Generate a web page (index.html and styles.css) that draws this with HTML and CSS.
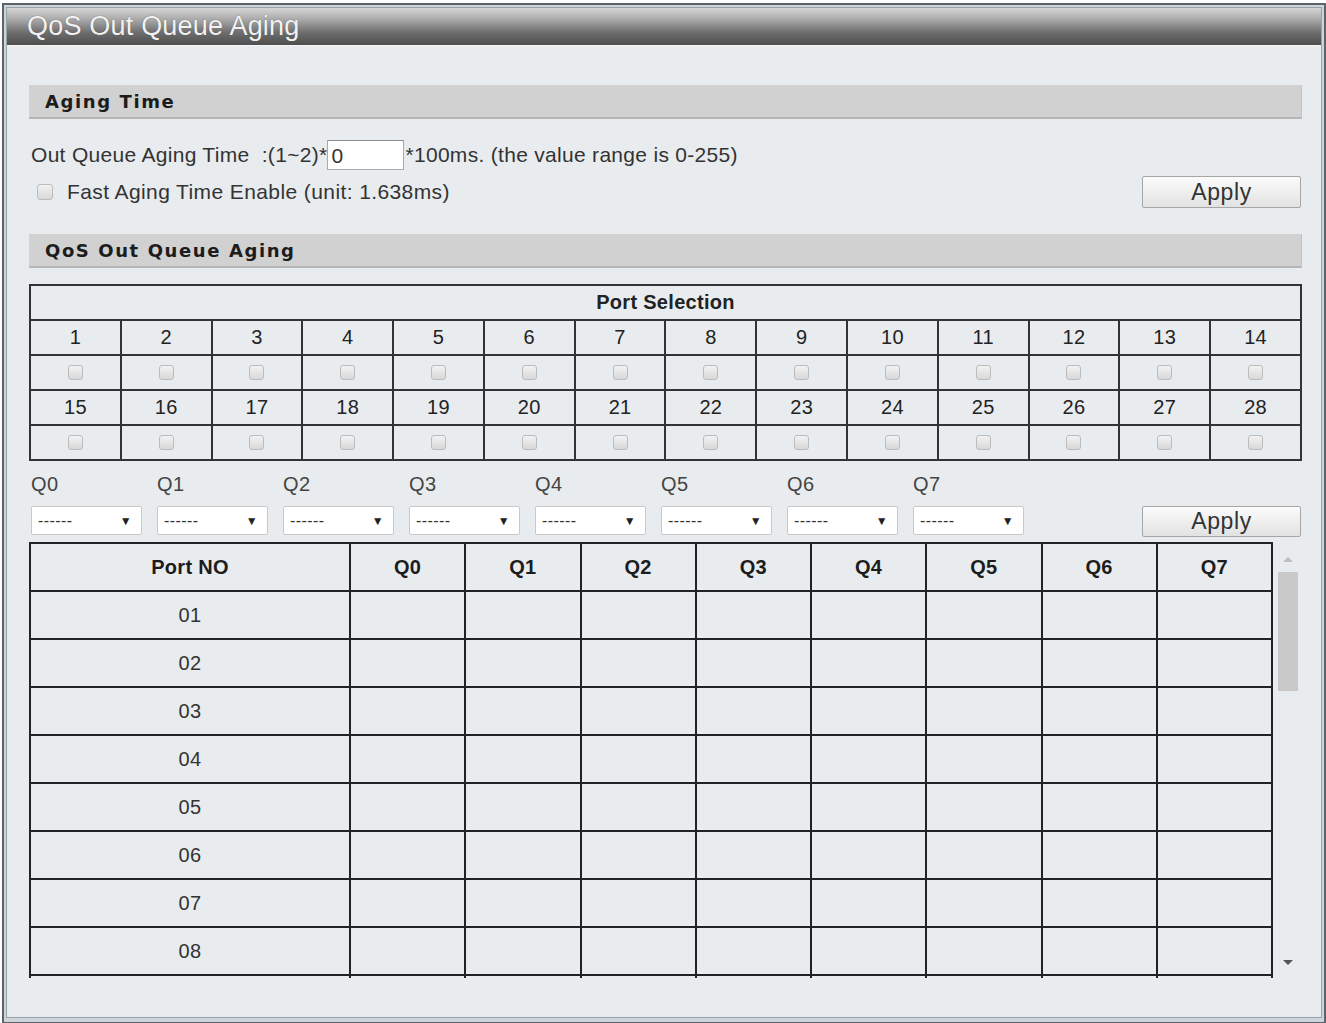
FILE: index.html
```html
<!DOCTYPE html>
<html>
<head>
<meta charset="utf-8">
<title>QoS Out Queue Aging</title>
<link rel="stylesheet" href="styles.css">
</head>
<body>
<div class="frame">
  <div class="window">
    <div class="titlebar">QoS Out Queue Aging</div>
    <div class="content">
      <div class="section-head">Aging Time</div>

      <div class="aging-row">
        <span>Out Queue Aging Time&nbsp; :(1~2)*</span><span class="textbox">0</span><span>*100ms. (the value range is 0-255)</span>
      </div>

      <div class="fast-row">
        <label class="fast"><span class="cb"></span>Fast Aging Time Enable (unit: 1.638ms)</label>
        <button class="btn">Apply</button>
      </div>

      <div class="section-head second">QoS Out Queue Aging</div>

      <table class="ports">
        <tr><th colspan="14" class="ports-title">Port Selection</th></tr>
        <tr class="num"><td>1</td><td>2</td><td>3</td><td>4</td><td>5</td><td>6</td><td>7</td><td>8</td><td>9</td><td>10</td><td>11</td><td>12</td><td>13</td><td>14</td></tr>
        <tr class="chk"><td><span class="cb"></span></td><td><span class="cb"></span></td><td><span class="cb"></span></td><td><span class="cb"></span></td><td><span class="cb"></span></td><td><span class="cb"></span></td><td><span class="cb"></span></td><td><span class="cb"></span></td><td><span class="cb"></span></td><td><span class="cb"></span></td><td><span class="cb"></span></td><td><span class="cb"></span></td><td><span class="cb"></span></td><td><span class="cb"></span></td></tr>
        <tr class="num"><td>15</td><td>16</td><td>17</td><td>18</td><td>19</td><td>20</td><td>21</td><td>22</td><td>23</td><td>24</td><td>25</td><td>26</td><td>27</td><td>28</td></tr>
        <tr class="chk"><td><span class="cb"></span></td><td><span class="cb"></span></td><td><span class="cb"></span></td><td><span class="cb"></span></td><td><span class="cb"></span></td><td><span class="cb"></span></td><td><span class="cb"></span></td><td><span class="cb"></span></td><td><span class="cb"></span></td><td><span class="cb"></span></td><td><span class="cb"></span></td><td><span class="cb"></span></td><td><span class="cb"></span></td><td><span class="cb"></span></td></tr>
      </table>

      <div class="queue-row">
        <div class="queue"><div class="qlabel">Q0</div><div class="select"><span class="dash">------</span><span class="caret">&#9660;</span></div></div>
        <div class="queue"><div class="qlabel">Q1</div><div class="select"><span class="dash">------</span><span class="caret">&#9660;</span></div></div>
        <div class="queue"><div class="qlabel">Q2</div><div class="select"><span class="dash">------</span><span class="caret">&#9660;</span></div></div>
        <div class="queue"><div class="qlabel">Q3</div><div class="select"><span class="dash">------</span><span class="caret">&#9660;</span></div></div>
        <div class="queue"><div class="qlabel">Q4</div><div class="select"><span class="dash">------</span><span class="caret">&#9660;</span></div></div>
        <div class="queue"><div class="qlabel">Q5</div><div class="select"><span class="dash">------</span><span class="caret">&#9660;</span></div></div>
        <div class="queue"><div class="qlabel">Q6</div><div class="select"><span class="dash">------</span><span class="caret">&#9660;</span></div></div>
        <div class="queue"><div class="qlabel">Q7</div><div class="select"><span class="dash">------</span><span class="caret">&#9660;</span></div></div>
        <button class="btn btn-queue">Apply</button>
      </div>

      <div class="list">
        <div class="viewport">
          <table class="map">
            <colgroup><col class="c-port"><col><col><col><col><col><col><col><col></colgroup>
            <tr><th>Port NO</th><th>Q0</th><th>Q1</th><th>Q2</th><th>Q3</th><th>Q4</th><th>Q5</th><th>Q6</th><th>Q7</th></tr>
            <tr><td>01</td><td></td><td></td><td></td><td></td><td></td><td></td><td></td><td></td></tr>
            <tr><td>02</td><td></td><td></td><td></td><td></td><td></td><td></td><td></td><td></td></tr>
            <tr><td>03</td><td></td><td></td><td></td><td></td><td></td><td></td><td></td><td></td></tr>
            <tr><td>04</td><td></td><td></td><td></td><td></td><td></td><td></td><td></td><td></td></tr>
            <tr><td>05</td><td></td><td></td><td></td><td></td><td></td><td></td><td></td><td></td></tr>
            <tr><td>06</td><td></td><td></td><td></td><td></td><td></td><td></td><td></td><td></td></tr>
            <tr><td>07</td><td></td><td></td><td></td><td></td><td></td><td></td><td></td><td></td></tr>
            <tr><td>08</td><td></td><td></td><td></td><td></td><td></td><td></td><td></td><td></td></tr>
            <tr class="next"><td></td><td></td><td></td><td></td><td></td><td></td><td></td><td></td><td></td></tr>
          </table>
        </div>
        <div class="scrollbar">
          <span class="arrow up"></span>
          <span class="thumb"></span>
          <span class="track"></span>
          <span class="arrow down"></span>
        </div>
      </div>
    </div>
  </div>
</div>
</body>
</html>
```

FILE: styles.css
```css
html, body {
  margin: 0;
  padding: 0;
  background: #ffffff;
}

body {
  font-family: "Liberation Sans", Arial, sans-serif;
  color: #333;
  font-size: 21px;
  letter-spacing: 0.4px;
}

/* outer window chrome */
.frame {
  margin: 3px 0 0 2px;
  width: 1316px;
  height: 1013px;
  border: 2px solid #5c646a;
  padding: 2px;
  background: #cdd5db;
}

.window {
  height: 1009px;
  border: 1px solid #97a3ab;
  background: #e9ecef;
  display: flex;
  flex-direction: column;
}

.titlebar {
  height: 37px;
  line-height: 36px;
  padding-left: 20px;
  font-size: 27px;
  letter-spacing: 0.2px;
  color: #f2f2f2;
  text-shadow: 0 0 1px #555;
  background: linear-gradient(#d6d6d6 0%, #ababab 30%, #6f6f6f 65%, #4e4e4e 100%);
  border-bottom: 1px solid #f6f7f8;
}

.content {
  padding: 39px 19px 0 22px;
}

/* grey section headers */
.section-head {
  height: 32px;
  line-height: 33px;
  padding-left: 16px;
  background: #d1d1d1;
  border-bottom: 2px solid #b6b6b6;
  border-right: 1px solid #c4c4c4;
  font-family: "DejaVu Sans", Verdana, sans-serif;
  font-weight: bold;
  font-size: 18px;
  letter-spacing: 1.6px;
  color: #1c1c1c;
}

.section-head.second {
  margin-top: 26px;
}

.aging-row {
  display: flex;
  align-items: center;
  height: 30px;
  margin-top: 21px;
  padding-left: 2px;
  letter-spacing: 0.3px;
}

.textbox {
  width: 72px;
  height: 28px;
  line-height: 30px;
  padding-left: 3px;
  border: 1px solid #a9a9a9;
  border-top-color: #8c8c8c;
  background: #fff;
  margin-right: 1px;
}

.fast-row {
  display: flex;
  align-items: center;
  justify-content: space-between;
  height: 32px;
  margin-top: 6px;
}

.fast {
  display: flex;
  align-items: center;
  padding-left: 8px;
}

.fast .cb {
  margin-right: 14px;
  width: 14px;
  height: 14px;
}

.cb {
  display: inline-block;
  width: 13px;
  height: 13px;
  border: 1px solid #bcbcbc;
  border-radius: 3px;
  background: linear-gradient(#f2f2f2, #d8d8d8);
  vertical-align: middle;
}

.btn {
  width: 159px;
  height: 32px;
  font-family: "Liberation Sans", Arial, sans-serif;
  font-size: 23px;
  letter-spacing: 0.6px;
  color: #333;
  padding: 0;
  text-align: center;
  border: 1px solid #a6a6a6;
  border-radius: 2px;
  background: linear-gradient(#fbfbfb, #e2e2e2);
  margin-right: 1px;
}

/* port selection grid */
.ports {
  margin-top: 16px;
  width: 1273px;
  border-collapse: collapse;
  table-layout: fixed;
  border: 2px solid #333;
  color: #222;
  font-size: 20px;
  letter-spacing: 0.3px;
}

.ports th, .ports td {
  border: 2px solid #333;
  text-align: center;
  padding: 0;
}

.ports-title {
  height: 33px;
  font-weight: bold;
  font-size: 20px;
}

.ports .num td {
  height: 33px;
}

.ports .chk td {
  height: 33px;
  line-height: 0;
}

/* per-queue selectors */
.queue-row {
  display: flex;
  align-items: flex-start;
  margin-top: 10px;
  padding-left: 2px;
}

.queue {
  width: 126px;
  display: flex;
  flex-direction: column;
}

.qlabel {
  height: 26px;
  line-height: 26px;
  font-size: 20px;
  color: #444;
}

.select {
  margin-top: 9px;
  width: 111px;
  height: 29px;
  border: 1px solid #c9c9c9;
  border-radius: 2px;
  background: #fff;
  display: flex;
  align-items: center;
  justify-content: space-between;
  padding: 0 9px 0 6px;
  box-sizing: border-box;
}

.dash {
  font-size: 16px;
  letter-spacing: 0.4px;
  color: #333;
}

.caret {
  font-size: 12px;
  color: #222;
}

.btn-queue {
  margin-left: auto;
  margin-top: 35px;
  height: 31px;
}

/* port / queue mapping list */
.list {
  display: flex;
  margin-top: 5px;
  height: 436px;
}

.viewport {
  width: 1244px;
  height: 436px;
  overflow: hidden;
}

.map {
  width: 1244px;
  border-collapse: collapse;
  table-layout: fixed;
  border: 2px solid #222;
  color: #333;
  font-size: 20px;
  letter-spacing: 0.3px;
}

.map .c-port {
  width: 320px;
}

.map th, .map td {
  border: 2px solid #222;
  height: 46px;
  padding: 0;
  text-align: center;
}

.map th {
  font-weight: bold;
  color: #1c1c1c;
}

.scrollbar {
  width: 29px;
  display: flex;
  flex-direction: column;
  align-items: center;
  padding-top: 15px;
  box-sizing: border-box;
}

.arrow {
  width: 0;
  height: 0;
  border-left: 5px solid transparent;
  border-right: 5px solid transparent;
}

.arrow.up {
  border-bottom: 5px solid #bdbdbd;
}

.arrow.down {
  border-top: 5px solid #555;
  margin-bottom: 13px;
}

.thumb {
  margin-top: 10px;
  width: 20px;
  height: 119px;
  background: #c9c9c9;
}

.track {
  flex: 1;
}
```
